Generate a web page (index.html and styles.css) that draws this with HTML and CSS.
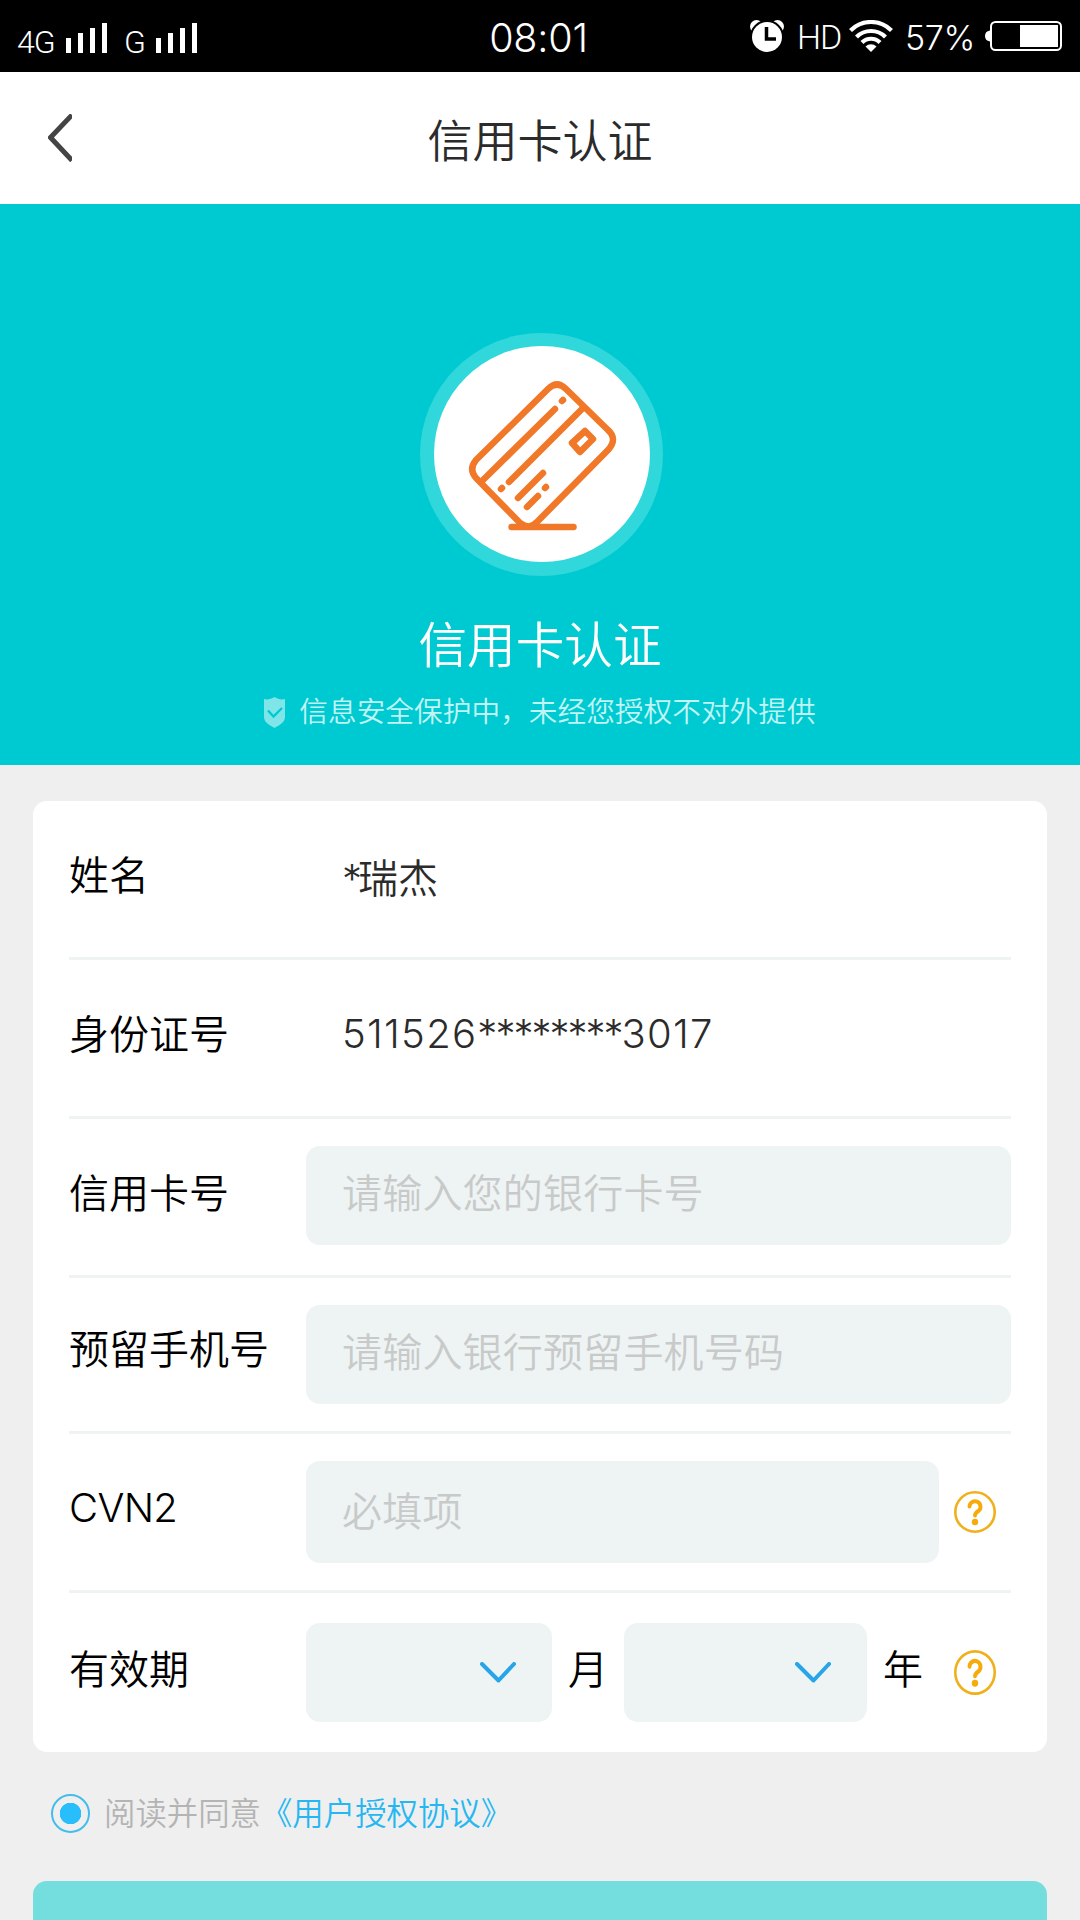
FILE: index.html
```html
<!DOCTYPE html>
<html lang="zh-CN">
<head>
    <meta charset="UTF-8">
    <meta name="viewport" content="width=device-width, initial-scale=1.0">
    <title>信用卡认证</title>
    <link rel="stylesheet" href="styles.css">
</head>
<body>
    <div class="status-bar">
        <div class="signals">
            <span class="net net-4g">4G</span>
            <svg class="bars" width="41" height="30" viewBox="0 0 41 30" fill="#fff"><path d="M0 15h5v15H0zM12 10h5v20h-5zM24 5h5v25h-5zM36 0h5v30h-5z"/></svg>
            <span class="net net-g">G</span>
            <svg class="bars" width="41" height="30" viewBox="0 0 41 30" fill="#fff"><path d="M0 15h5v15H0zM12 10h5v20h-5zM24 5h5v25h-5zM36 0h5v30h-5z"/></svg>
        </div>
        <div class="clock">08:01</div>
        <div class="status-icons">
            <svg class="alarm" width="34" height="32" viewBox="0 0 34 32">
                <circle cx="6.500" cy="6.500" r="6.500" fill="#fff"/>
                <circle cx="27.500" cy="6.500" r="6.500" fill="#fff"/>
                <circle cx="17" cy="17" r="17" fill="#000"/>
                <circle cx="17" cy="17" r="15" fill="#fff"/>
                <path d="M16.500 7v12H26" fill="none" stroke="#000" stroke-width="3.500"/>
            </svg>
            <span class="hd">HD</span>
            <svg class="wifi" width="44" height="32" viewBox="0 0 44 32" fill="none" stroke="#fff" stroke-width="4.200">
                <path d="M1.500 10.500a29 29 0 0 1 41 0M7.500 17a20.500 20.500 0 0 1 29 0M13 22.500a12.700 12.700 0 0 1 18 0"/>
                <path d="M22 32l-5.500-5.500a8 8 0 0 1 11 0z" fill="#fff" stroke="none"/>
            </svg>
            <span class="percent">57%</span>
            <svg class="battery" width="77" height="30" viewBox="0 0 77 30">
                <path d="M5 9.500C1.500 10 0 12 0 15s1.500 5 5 5.500z" fill="#fff"/>
                <rect x="6" y="1" width="70" height="28" rx="4.500" fill="none" stroke="#fff" stroke-width="2"/>
                <rect x="35" y="4" width="38" height="22" fill="#fff"/>
            </svg>
        </div>
    </div>

    <div class="navbar">
        <svg class="back" width="24" height="48" viewBox="0 0 24 48" fill="none" stroke="#444" stroke-width="5"><path d="M24 1L2.500 23.500 24 46.500"/></svg>
        <h1>信用卡认证</h1>
    </div>

    <div class="hero">
        <div class="hero-icon">
            <svg width="216" height="216" viewBox="0 0 216 216" fill="none" stroke="#f07828" stroke-width="6.500" stroke-linecap="round" stroke-linejoin="round">
                <path d="M89 180L43 133Q34 124 42 114L114 43Q123 34 132 43L174 84Q184 93 174 104L103 176Q96 184 88 178"/>
                <path d="M77.500 181h62"/>
                <path d="M49 134L121 63M75 136L148 63"/>
                <path d="M128 55l1-1M67 143l1-1"/>
                <path d="M84 152l25-25M93 161l11-11M111 142l1-1"/>
                <path d="M151 85l8 8-13 13-8-9z"/>
            </svg>
        </div>
        <div class="hero-title">信用卡认证</div>
        <div class="hero-tip">
            <svg width="21" height="31" viewBox="0 0 21 31"><path d="M0 2c4 1 7 0 10.500-2C14 2 17 3 21 2v18c0 5-5 8-10.500 11C5 28 0 25 0 20z" fill="#80e5e8"/><path d="M4 13.500l5.500 6L18 11" fill="none" stroke="#00cad1" stroke-width="2.400"/></svg>
            <span>信息安全保护中，未经您授权不对外提供</span>
        </div>
    </div>

    <form class="card">
        <div class="row">
            <label>姓名</label>
            <span class="value name"><span class="mask">*</span>瑞杰</span>
        </div>
        <div class="row">
            <label>身份证号</label>
            <span class="value">511526<span class="mask">********</span>3017</span>
        </div>
        <div class="row">
            <label for="card-no">信用卡号</label>
            <input type="text" id="card-no" class="card-no" placeholder="请输入您的银行卡号">
        </div>
        <div class="row row-phone">
            <label for="phone">预留手机号</label>
            <input type="text" id="phone" placeholder="请输入银行预留手机号码">
        </div>
        <div class="row">
            <label for="cvn" class="latin">CVN2</label>
            <input type="text" id="cvn" class="cvn" placeholder="必填项">
            <svg class="help" width="42" height="42" viewBox="0 0 42 42"><circle cx="21" cy="21" r="19.700" fill="none" stroke="#f0b01c" stroke-width="2.600"/><path d="M15.500 15.500a5.500 5.500 0 1 1 9.500 4q-4 2.500-4 5" fill="none" stroke="#f5ab0c" stroke-width="3.900" stroke-linecap="round"/><circle cx="21" cy="31" r="3.200" fill="#f5ab0c"/></svg>
        </div>
        <div class="row row-date">
            <label>有效期</label>
            <div class="select month">
                <svg width="36" height="21" viewBox="0 0 36 21" fill="none" stroke="#26a5e8" stroke-width="4" stroke-linecap="round" stroke-linejoin="round"><path d="M2 2l16.500 16.500L34 2"/></svg>
            </div>
            <span class="unit">月</span>
            <div class="select year">
                <svg width="36" height="21" viewBox="0 0 36 21" fill="none" stroke="#26a5e8" stroke-width="4" stroke-linecap="round" stroke-linejoin="round"><path d="M2 2l16.500 16.500L34 2"/></svg>
            </div>
            <span class="unit">年</span>
            <svg class="help" width="42" height="45" viewBox="0 0 42 42" preserveAspectRatio="none"><circle cx="21" cy="21" r="19.700" fill="none" stroke="#f0b01c" stroke-width="2.600"/><path d="M15.500 15.500a5.500 5.500 0 1 1 9.500 4q-4 2.500-4 5" fill="none" stroke="#f5ab0c" stroke-width="3.900" stroke-linecap="round"/><circle cx="21" cy="31" r="3.200" fill="#f5ab0c"/></svg>
        </div>
    </form>

    <div class="agree">
        <span class="radio"></span>
        <span class="agree-text">阅读并同意<a>《用户授权协议》</a></span>
    </div>
    <div class="submit"></div>
</body>
</html>
```
FILE: styles.css
```css
* {
    box-sizing: border-box;
}
html {
    overflow: hidden;
}
body {
    margin: 0;
    height: 1920px;
    overflow: hidden;
    background: #efefef;
    font-family: Inter, "Noto Sans CJK SC", sans-serif;
    font-weight: 350;
    color: #000;
}
svg {
    display: block;
    flex: none;
}

/* status bar */
.status-bar {
    display: flex;
    justify-content: space-between;
    height: 72px;
    background: #000;
    color: #fff;
    white-space: nowrap;
}
.signals {
    display: flex;
    align-items: flex-end;
    width: 400px;
    padding: 0 0 19px 17px;
}
.net {
    font-family: Roboto, sans-serif;
    font-size: 32px;
    line-height: 22px;
    height: 22px;
}
.net-4g {
    width: 49px;
    letter-spacing: -1px;
}
.net-g {
    width: 32px;
    margin-left: 17px;
}
.clock {
    width: 280px;
    text-align: center;
    font-size: 39.5px;
    line-height: 76px;
    padding-right: 3px;
    letter-spacing: -0.2px;
}
.status-icons {
    display: flex;
    width: 400px;
    padding-left: 70px;
}
.alarm, .wifi {
    margin-top: 20px;
}
.hd {
    width: 50px;
    margin-left: 13px;
    font-family: Roboto, sans-serif;
    font-size: 34px;
    line-height: 74px;
    letter-spacing: -1px;
}
.wifi {
    margin-left: 2px;
}
.percent {
    width: 80px;
    margin-left: 12px;
    font-size: 34px;
    line-height: 75px;
    letter-spacing: -0.4px;
}
.battery {
    margin-top: 21px;
}

/* nav */
.navbar {
    display: flex;
    align-items: center;
    height: 132px;
    padding: 0 48px;
    background: #fff;
}
.navbar h1 {
    flex: 1;
    margin: 0 24px 0 0;
    padding-top: 8px;
    text-align: center;
    font-size: 45px;
    line-height: 60px;
    font-weight: 350;
    color: #2b2b2b;
}

/* hero */
.hero {
    display: flex;
    flex-direction: column;
    align-items: center;
    height: 561px;
    padding-top: 129px;
    background: #00cad1;
    color: #fff;
}
.hero-icon {
    width: 243px;
    height: 243px;
    padding: 13px 13px 14px 14px;
    margin-left: 2px;
    border-radius: 50%;
    background: #30d7db;
}
.hero-icon svg {
    border-radius: 50%;
    background: #fff;
}
.hero-title {
    margin-top: 34px;
    font-size: 48.6px;
    line-height: 72px;
}
.hero-tip {
    display: flex;
    align-items: center;
    margin-top: 10px;
    font-size: 28.7px;
    line-height: 40px;
    color: #c0f4f5;
}
.hero-tip span {
    margin-left: 14px;
    white-space: nowrap;
}

/* form */
.card {
    margin: 36px 33px 0;
    padding: 0 36px;
    border-radius: 14px;
    background: #fff;
}
.row {
    display: flex;
    align-items: center;
    height: 159px;
    border-bottom: 3px solid #eff3f3;
    font-size: 40px;
}
.row-phone {
    height: 156px;
}
.row-date {
    border-bottom: none;
}
.row label {
    width: 237px;
    line-height: 60px;
    padding-bottom: 7px;
}
.row-phone label {
    padding-bottom: 9px;
}
.row label.latin {
    font-weight: 300;
    letter-spacing: -0.7px;
    padding-bottom: 8px;
}
.row-date label {
    padding-bottom: 5px;
}
.value {
    padding-left: 36px;
    padding-bottom: 8px;
    line-height: 60px;
    font-weight: 300;
    color: #2b2b2b;
    letter-spacing: 1.3px;
}
.value.name {
    padding-bottom: 1px;
    font-weight: 350;
    letter-spacing: 0;
}
.mask {
    letter-spacing: -2px;
}
.name .mask {
    letter-spacing: -4px;
}
input {
    flex: 1;
    height: 99px;
    min-width: 0;
    margin: 0;
    padding: 0 36px 5px;
    border: none;
    border-radius: 14px;
    background: #eef4f4;
    font: inherit;
    letter-spacing: 0.2px;
}
input::placeholder {
    color: #c8cac9;
    opacity: 1;
}
input.card-no {
    margin-bottom: 3px;
    padding-bottom: 4px;
}
input.cvn {
    flex: none;
    width: 633px;
    height: 102px;
    padding-bottom: 2px;
}
.help {
    margin-left: 15px;
}
.select {
    display: flex;
    align-items: center;
    justify-content: flex-end;
    height: 99px;
    padding-right: 36px;
    border-radius: 14px;
    background: #eef4f4;
}
.month {
    width: 246px;
}
.year {
    width: 243px;
}
.unit {
    width: 72px;
    text-align: center;
    line-height: 60px;
    padding-bottom: 5px;
}

/* agreement */
.agree {
    display: flex;
    align-items: center;
    height: 129px;
    padding: 0 0 7px 51px;
    font-size: 31.4px;
}
.radio {
    width: 39px;
    height: 39px;
    border: 2px solid #45bdec;
    border-radius: 50%;
    background: radial-gradient(circle, #28bdfb 10.5px, transparent 11px);
}
.agree-text {
    margin-left: 14px;
    padding-top: 2px;
    line-height: 40px;
    color: #b4b4b4;
}
.agree-text a {
    color: #26b7f2;
}
.submit {
    height: 99px;
    margin: 0 33px;
    border-radius: 14px;
    background: #74dddd;
}
```
